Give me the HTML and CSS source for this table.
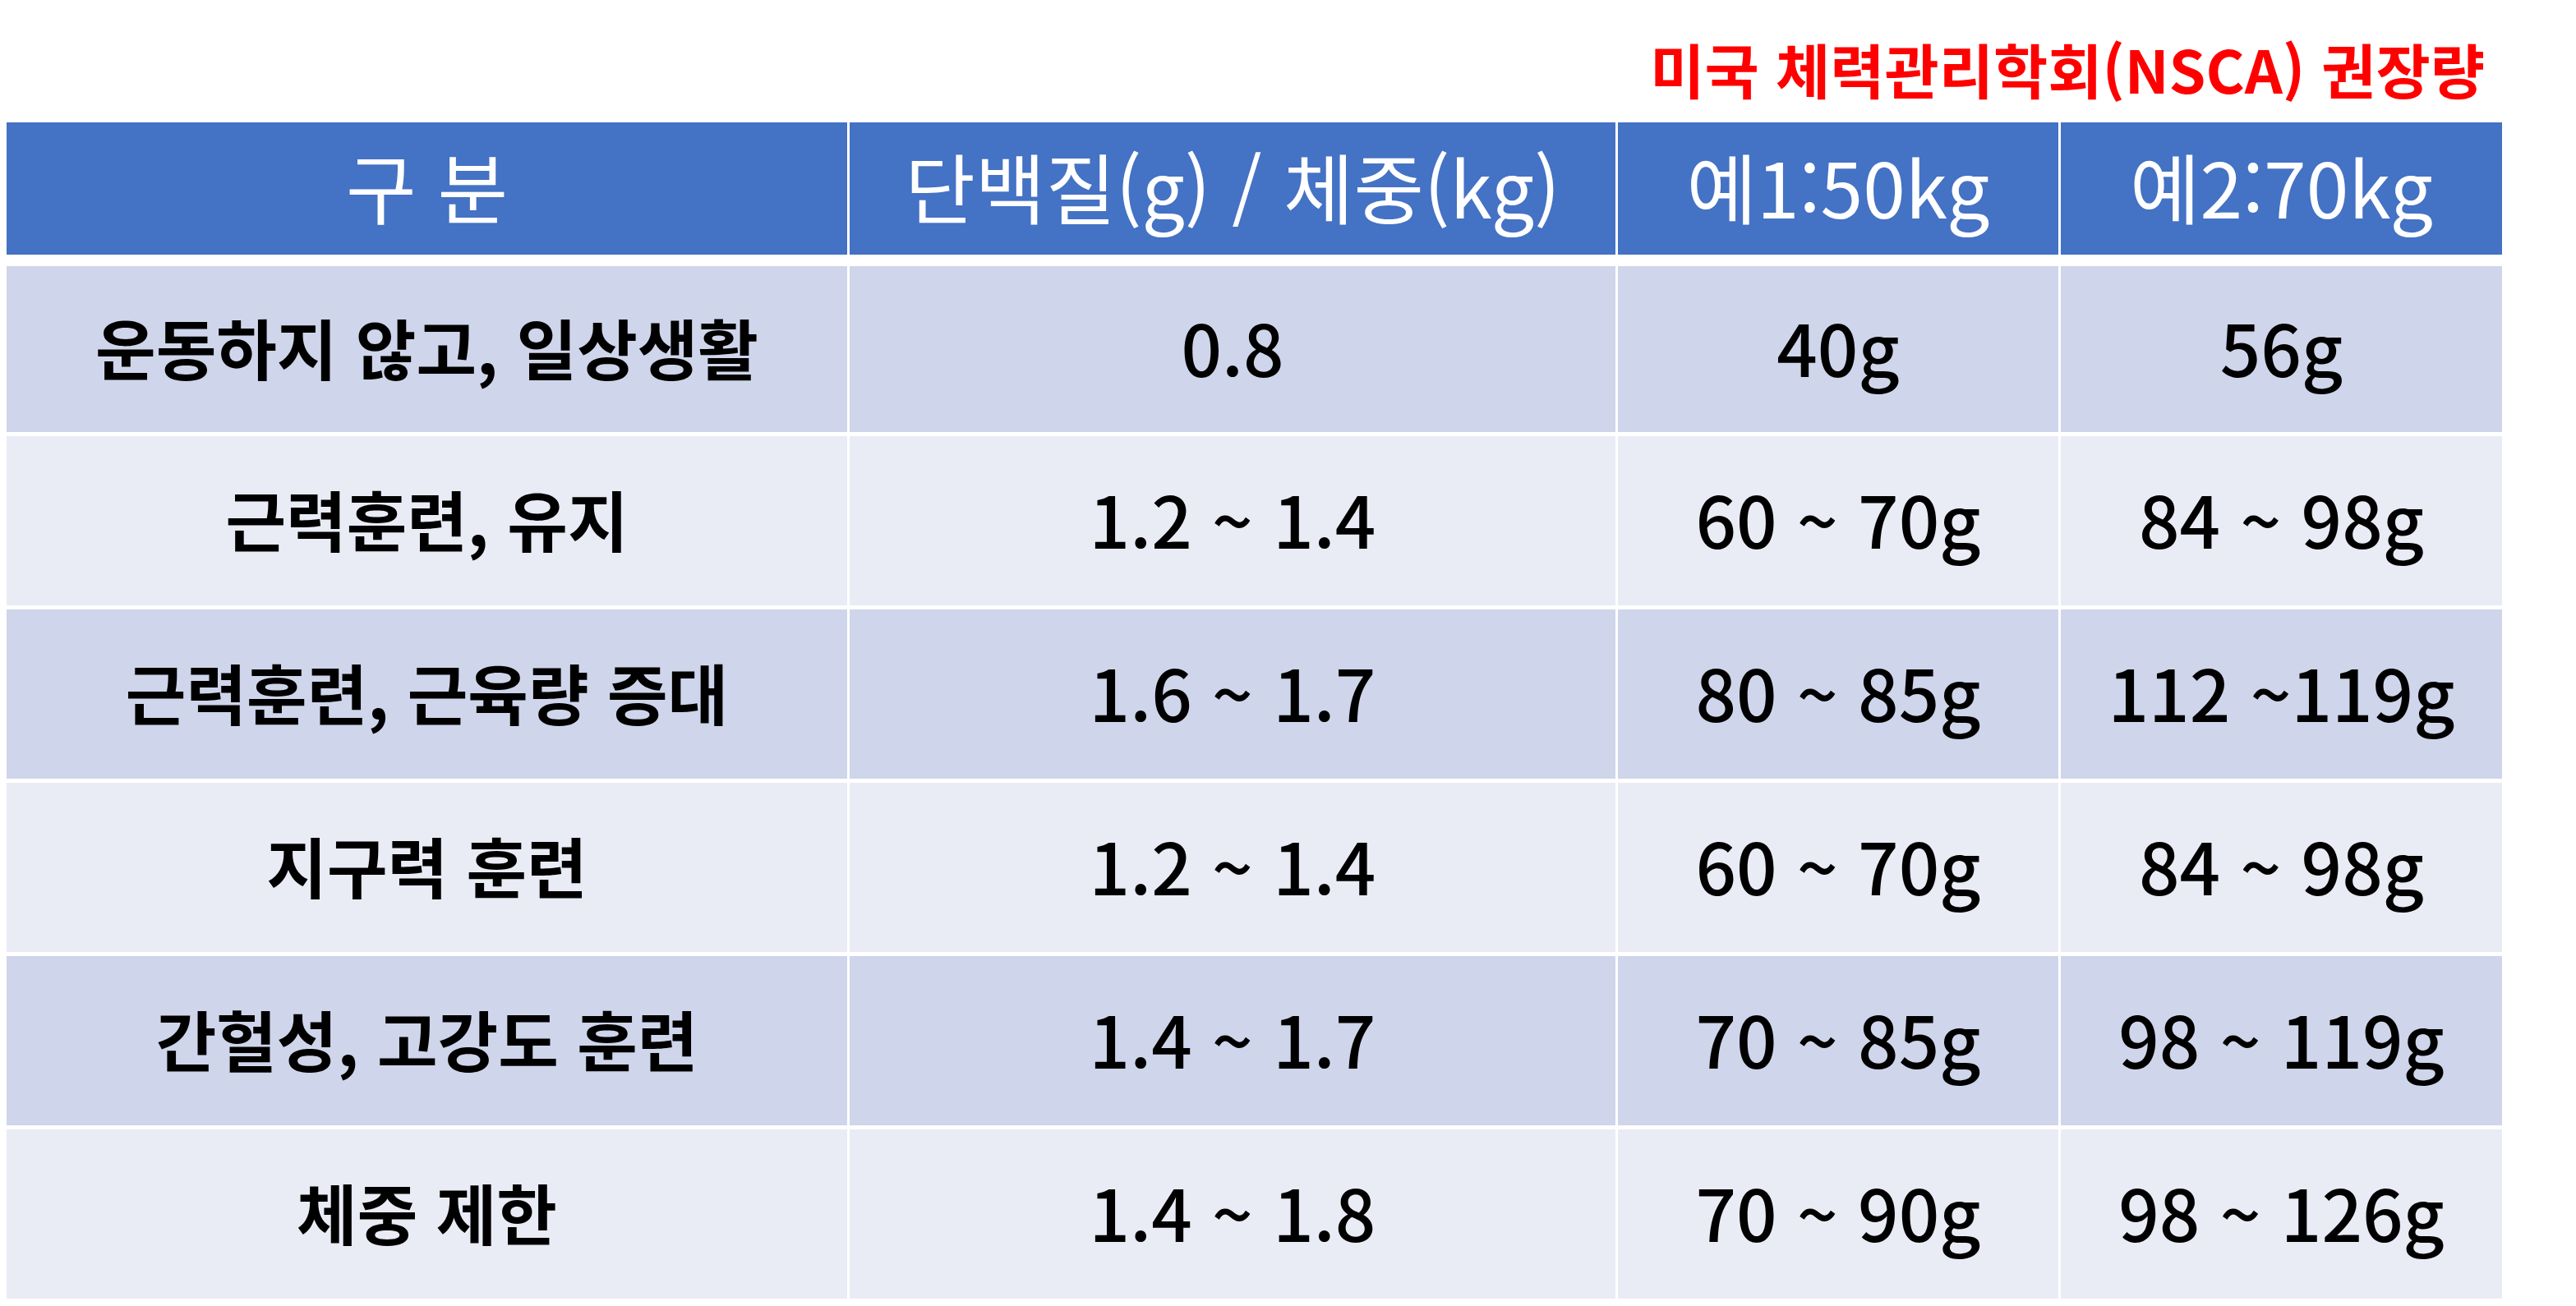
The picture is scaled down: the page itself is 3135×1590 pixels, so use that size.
FILE: index.html
```html
<!DOCTYPE html>
<html lang="ko">
<head>
<meta charset="utf-8">
<title>NSCA 단백질 권장량</title>
<link rel="stylesheet" href="styles.css">
</head>
<body>
<div class="page">
  <div class="caption">미국 체력관리학회(NSCA) 권장량</div>
  <div class="table">
    <div class="row head">
      <div class="cell">구 분</div>
      <div class="cell">단백질(g) / 체중(kg)</div>
      <div class="cell">예1:50kg</div>
      <div class="cell">예2:70kg</div>
    </div>
    <div class="body">
      <div class="row odd">
        <div class="cell label">운동하지 않고, 일상생활</div>
        <div class="cell">0.8</div>
        <div class="cell">40g</div>
        <div class="cell">56g</div>
      </div>
      <div class="row even">
        <div class="cell label">근력훈련, 유지</div>
        <div class="cell">1.2 ~ 1.4</div>
        <div class="cell">60 ~ 70g</div>
        <div class="cell">84 ~ 98g</div>
      </div>
      <div class="row odd">
        <div class="cell label">근력훈련, 근육량 증대</div>
        <div class="cell">1.6 ~ 1.7</div>
        <div class="cell">80 ~ 85g</div>
        <div class="cell">112 ~119g</div>
      </div>
      <div class="row even">
        <div class="cell label">지구력 훈련</div>
        <div class="cell">1.2 ~ 1.4</div>
        <div class="cell">60 ~ 70g</div>
        <div class="cell">84 ~ 98g</div>
      </div>
      <div class="row odd">
        <div class="cell label">간헐성, 고강도 훈련</div>
        <div class="cell">1.4 ~ 1.7</div>
        <div class="cell">70 ~ 85g</div>
        <div class="cell">98 ~ 119g</div>
      </div>
      <div class="row even">
        <div class="cell label">체중 제한</div>
        <div class="cell">1.4 ~ 1.8</div>
        <div class="cell">70 ~ 90g</div>
        <div class="cell">98 ~ 126g</div>
      </div>
    </div>
  </div>
</div>
</body>
</html>
```

FILE: styles.css
```css
html, body {
  margin: 0;
  padding: 0;
  background: #ffffff;
}

body {
  font-family: "Noto Sans CJK KR", "Noto Sans", sans-serif;
  color: #000000;
}

.page {
  width: 3037px;
  padding-left: 8px;
}

.caption {
  height: 149px;
  box-sizing: border-box;
  padding-top: 47px;
  padding-right: 21px;
  text-align: right;
  font-size: 72px;
  line-height: 1;
  font-weight: 700;
  color: #ff0000;
  white-space: nowrap;
}

.table {
  display: flex;
  flex-direction: column;
}

.row {
  display: grid;
  grid-template-columns: 1023px 932px 536px 537px;
  column-gap: 3px;
  height: 206px;
}

.head {
  height: 161px;
}

.head .cell {
  background: #4472c4;
  color: #ffffff;
  font-size: 93px;
  font-weight: 400;
  padding-bottom: 8px;
}

.body {
  margin-top: 14px;
  display: flex;
  flex-direction: column;
  gap: 5px;
}

.body .row:first-child {
  height: 202px;
}

.cell {
  box-sizing: border-box;
  display: flex;
  align-items: center;
  justify-content: center;
  font-size: 87px;
  font-weight: 500;
  line-height: 1;
  white-space: nowrap;
  padding-bottom: 8px;
}

.label {
  font-size: 80px;
  font-weight: 700;
}

.odd .cell {
  background: #cfd5ea;
}

.even .cell {
  background: #e9ebf5;
}
```
